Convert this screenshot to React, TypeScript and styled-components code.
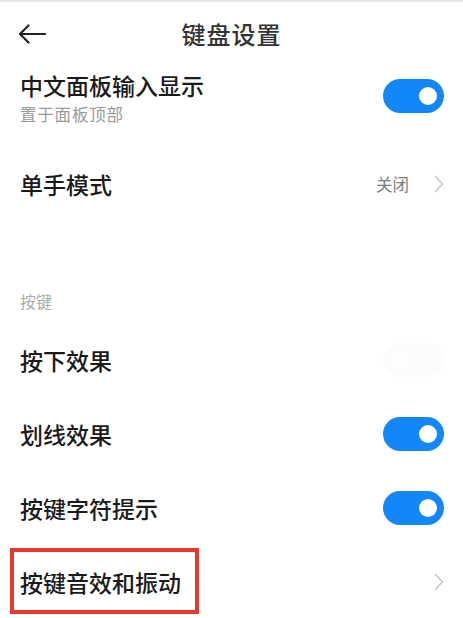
import React, { useState } from 'react';
import styled, { createGlobalStyle } from 'styled-components';

const GlobalStyle = createGlobalStyle`
	html, body {
		margin: 0;
		padding: 0;
		background: #ffffff;
		font-family: "Noto Sans CJK SC", "Noto Sans", sans-serif;
	}
`;

const Page = styled.div`
	width: 463px;
	height: 618px;
	overflow: hidden;
	background: #ffffff;
	position: relative;
`;

const TopEdge = styled.div`
	height: 3px;
	background: linear-gradient(#dcdcdc, #ffffff);
`;

const Header = styled.div`
	height: 61px;
	display: flex;
	align-items: center;
	justify-content: center;
	position: relative;
`;

const BackButton = styled.button`
	position: absolute;
	left: 14px;
	top: 18px;
	width: 36px;
	height: 26px;
	padding: 0;
	border: none;
	background: none;
	display: flex;
	align-items: center;
	justify-content: center;
`;

const Title = styled.h1`
	margin: 0;
	font-size: 24px;
	line-height: 32px;
	font-weight: 500;
	color: #333333;
	letter-spacing: 1px;
`;

const Row = styled.div<{ $height?: number; $align?: string }>`
	display: flex;
	align-items: ${(p) => p.$align || 'center'};
	justify-content: space-between;
	height: ${(p) => p.$height || 74}px;
	padding: 0 19px 0 20px;
	box-sizing: border-box;
	position: relative;
`;

const TopRow = styled(Row)`
	padding-top: 7px;
`;

const TextBlock = styled.div`
	display: flex;
	flex-direction: column;
	gap: 4px;
`;

const Label = styled.span`
	font-size: 23px;
	line-height: 28px;
	font-weight: 500;
	color: #1a1a1a;
`;

const SubLabel = styled.span`
	font-size: 16.5px;
	line-height: 22px;
	color: #9a9a9a;
	letter-spacing: 0.8px;
`;

const SectionLabel = styled.div`
	height: 102px;
	padding: 70px 20px 0;
	box-sizing: border-box;
	font-size: 16px;
	line-height: 20px;
	color: #ababab;
`;

const Right = styled.div`
	display: flex;
	align-items: center;
	gap: 25px;
`;

const Value = styled.span`
	font-size: 16.5px;
	color: #7d7d7d;
`;

const Track = styled.button<{ $on: boolean; $offset?: number }>`
	width: 61px;
	height: 34px;
	margin-top: ${(p) => p.$offset || 0}px;
	border: none;
	padding: 0;
	border-radius: 17px;
	background: ${(p) => (p.$on ? '#1386f8' : '#fcfcfc')};
	position: relative;
	cursor: pointer;
`;

const Knob = styled.span<{ $on: boolean }>`
	position: absolute;
	top: 8px;
	left: ${(p) => (p.$on ? '36px' : '7px')};
	width: 18px;
	height: 18px;
	border-radius: 50%;
	background: ${(p) => (p.$on ? '#ffffff' : '#fefefe')};
`;

const Highlight = styled.div`
	position: absolute;
	left: 10px;
	top: 3px;
	width: 189px;
	height: 66px;
	border: 4px solid #e8372e;
	box-sizing: border-box;
	pointer-events: none;
`;

const Chevron = () => (
	<svg width="10" height="18" viewBox="0 0 10 18" fill="none">
		<path d="M1.5 1.5 L8.5 9 L1.5 16.5" stroke="#c4c4c4" strokeWidth="1.4" strokeLinecap="round" strokeLinejoin="round" />
	</svg>
);

const BackArrow = () => (
	<svg width="28" height="20" viewBox="0 0 28 20" fill="none">
		<path d="M27 10 H2 M10.5 1.5 L2 10 L10.5 18.5" stroke="#222222" strokeWidth="2.2" strokeLinecap="round" strokeLinejoin="round" />
	</svg>
);

const Toggle = ({ on, offset, onChange }: { on: boolean; offset?: number; onChange: () => void }) => (
	<Track $on={on} $offset={offset} onClick={onChange}>
		<Knob $on={on} />
	</Track>
);

export default function App() {
	const [panel, setPanel] = useState(true);
	const [press, setPress] = useState(false);
	const [swipe, setSwipe] = useState(true);
	const [hint, setHint] = useState(true);

	return (
		<Page>
			<GlobalStyle />
			<TopEdge />
			<Header>
				<BackButton aria-label='返回'>
					<BackArrow />
				</BackButton>
				<Title>键盘设置</Title>
			</Header>

			<TopRow $height={83} $align='flex-start'>
				<TextBlock>
					<Label>中文面板输入显示</Label>
					<SubLabel>置于面板顶部</SubLabel>
				</TextBlock>
				<Toggle on={panel} offset={8} onChange={() => setPanel(!panel)} />
			</TopRow>

			<Row>
				<Label>单手模式</Label>
				<Right>
					<Value>关闭</Value>
					<Chevron />
				</Right>
			</Row>

			<SectionLabel>按键</SectionLabel>

			<Row>
				<Label>按下效果</Label>
				<Toggle on={press} onChange={() => setPress(!press)} />
			</Row>
			<Row>
				<Label>划线效果</Label>
				<Toggle on={swipe} onChange={() => setSwipe(!swipe)} />
			</Row>
			<Row>
				<Label>按键字符提示</Label>
				<Toggle on={hint} onChange={() => setHint(!hint)} />
			</Row>
			<Row>
				<Label>按键音效和振动</Label>
				<Chevron />
				<Highlight />
			</Row>
		</Page>
	);
}
